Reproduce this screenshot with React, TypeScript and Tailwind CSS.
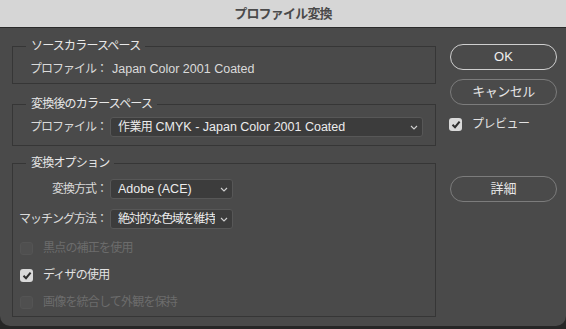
import type { ReactNode } from 'react';

const FONT = { fontFamily: '"Liberation Sans", "Noto Sans CJK JP", sans-serif' };

const Chevron = () => (
  <svg width="8" height="5" viewBox="0 0 8 5" className="shrink-0">
    <path d="M1 1 L4 4 L7 1" fill="none" stroke="#d0d0d0" strokeWidth="1.1" />
  </svg>
);

const Check = () => (
  <svg width="10" height="9" viewBox="0 0 10 9">
    <path d="M1.5 4.8 L4 7.2 L8.6 1.6" fill="none" stroke="#2e2e2e" strokeWidth="2" />
  </svg>
);

const Checkbox = ({ checked, disabled, label }: { checked?: boolean; disabled?: boolean; label: string }) => (
  <div className="flex h-[20px] items-center">
    {checked ? (
      <span className="flex h-[13px] w-[13px] items-center justify-center rounded-[3px] bg-[#d9d9d9]">
        <Check />
      </span>
    ) : (
      <span
        className={
          disabled
            ? 'h-[13px] w-[13px] rounded-[3px] border border-[#545454] bg-[#4f4f4f]'
            : 'h-[13px] w-[13px] rounded-[3px] border border-[#777] bg-[#555]'
        }
      />
    )}
    <span className={`ml-[10px] tracking-[-0.8px] ${disabled ? 'text-[#6c6c6c]' : 'text-[#e2e2e2]'}`}>{label}</span>
  </div>
);

const Select = ({ width, children }: { width: string; children: ReactNode }) => (
  <div className={`flex h-[20px] items-center justify-between rounded-[3px] border border-[#575757] bg-[#3c3c3c] pl-[7px] pr-[4px] text-[#ececec] ${width}`}>
    <span className="truncate">{children}</span>
    <Chevron />
  </div>
);

const Group = ({ title, children, className }: { title: string; children: ReactNode; className?: string }) => (
  <fieldset className={`border border-[#363636] ${className ?? ''}`}>
    <legend className="ml-[13px] px-[5px] leading-[16px] tracking-[-0.8px] text-[#e8e8e8]">{title}</legend>
    {children}
  </fieldset>
);

const Label = ({ children }: { children: ReactNode }) => (
  <span className="w-[94px] shrink-0 whitespace-nowrap text-right tracking-[-1px] text-[#dadada]">{children}</span>
);

const PillButton = ({ children, primary }: { children: ReactNode; primary?: boolean }) => (
  <button
    className={`flex h-[26px] w-[107px] items-center justify-center rounded-full text-[13px] ${
      primary ? 'border-[1.5px] border-[#cfcfcf] text-[#f0f0f0]' : 'border border-[#7c7c7c] text-[#e6e6e6]'
    }`}
  >
    {children}
  </button>
);

export default function App() {
  return (
    <div className="h-[329px] w-[566px] bg-[#262626] text-[12px]" style={FONT}>
      <div className="flex h-[326px] flex-col overflow-hidden rounded-b-[10px] bg-[#4a4a4a]">
        <div className="flex h-[28px] shrink-0 items-center justify-center border-b border-[#2a2a2a] bg-[#d6d6d6]">
          <span className="text-[13px] font-bold tracking-[-0.8px] text-[#4a4a4a]">プロファイル変換</span>
        </div>

        <div className="flex">
          <div className="ml-[12px] w-[424px] pt-[10px]">
            <Group title="ソースカラースペース" className="pb-[6px] pt-[7px]">
              <div className="flex h-[16px] items-center">
                <Label>プロファイル：</Label>
                <span className="ml-[5px] text-[12.5px] text-[#dadada]">Japan Color 2001 Coated</span>
              </div>
            </Group>

            <Group title="変換後のカラースペース" className="mt-[12px] pb-[8px] pt-[5px]">
              <div className="flex items-center">
                <Label>プロファイル：</Label>
                <div className="ml-[3px]">
                  <Select width="w-[313px]">
                    <span className="tracking-[-0.6px]">作業用</span>{' '}
                    <span className="text-[12.5px]">CMYK - Japan Color 2001 Coated</span>
                  </Select>
                </div>
              </div>
            </Group>

            <Group title="変換オプション" className="mt-[9px] pb-[4px] pt-[8px]">
              <div className="flex items-center">
                <Label>変換方式：</Label>
                <div className="ml-[3px]">
                  <Select width="w-[123px]">
                    <span className="text-[12.5px]">Adobe (ACE)</span>
                  </Select>
                </div>
              </div>
              <div className="mt-[10px] flex items-center">
                <Label>マッチング方法：</Label>
                <div className="ml-[3px]">
                  <Select width="w-[123px]">
                    <span className="tracking-[-1.2px]">絶対的な色域を維持</span>
                  </Select>
                </div>
              </div>
              <div className="mt-[9px] flex flex-col gap-[7px] pl-[7px]">
                <Checkbox disabled label="黒点の補正を使用" />
                <Checkbox checked label="ディザの使用" />
                <Checkbox disabled label="画像を統合して外観を保持" />
              </div>
            </Group>
          </div>

          <div className="ml-[14px] flex w-[107px] flex-col pt-[16px]">
            <PillButton primary>OK</PillButton>
            <div className="mt-[9px]">
              <PillButton>
                <span className="tracking-[-0.5px]">キャンセル</span>
              </PillButton>
            </div>
            <div className="mt-[11px] flex h-[16px] items-center">
              <span className="-ml-[1px] flex h-[13px] w-[13px] items-center justify-center rounded-[3px] bg-[#d9d9d9]">
                <Check />
              </span>
              <span className="ml-[10px] tracking-[-0.5px] text-[#e2e2e2]">プレビュー</span>
            </div>
            <div className="mt-[44px]">
              <PillButton>詳細</PillButton>
            </div>
          </div>
        </div>
      </div>
    </div>
  );
}
